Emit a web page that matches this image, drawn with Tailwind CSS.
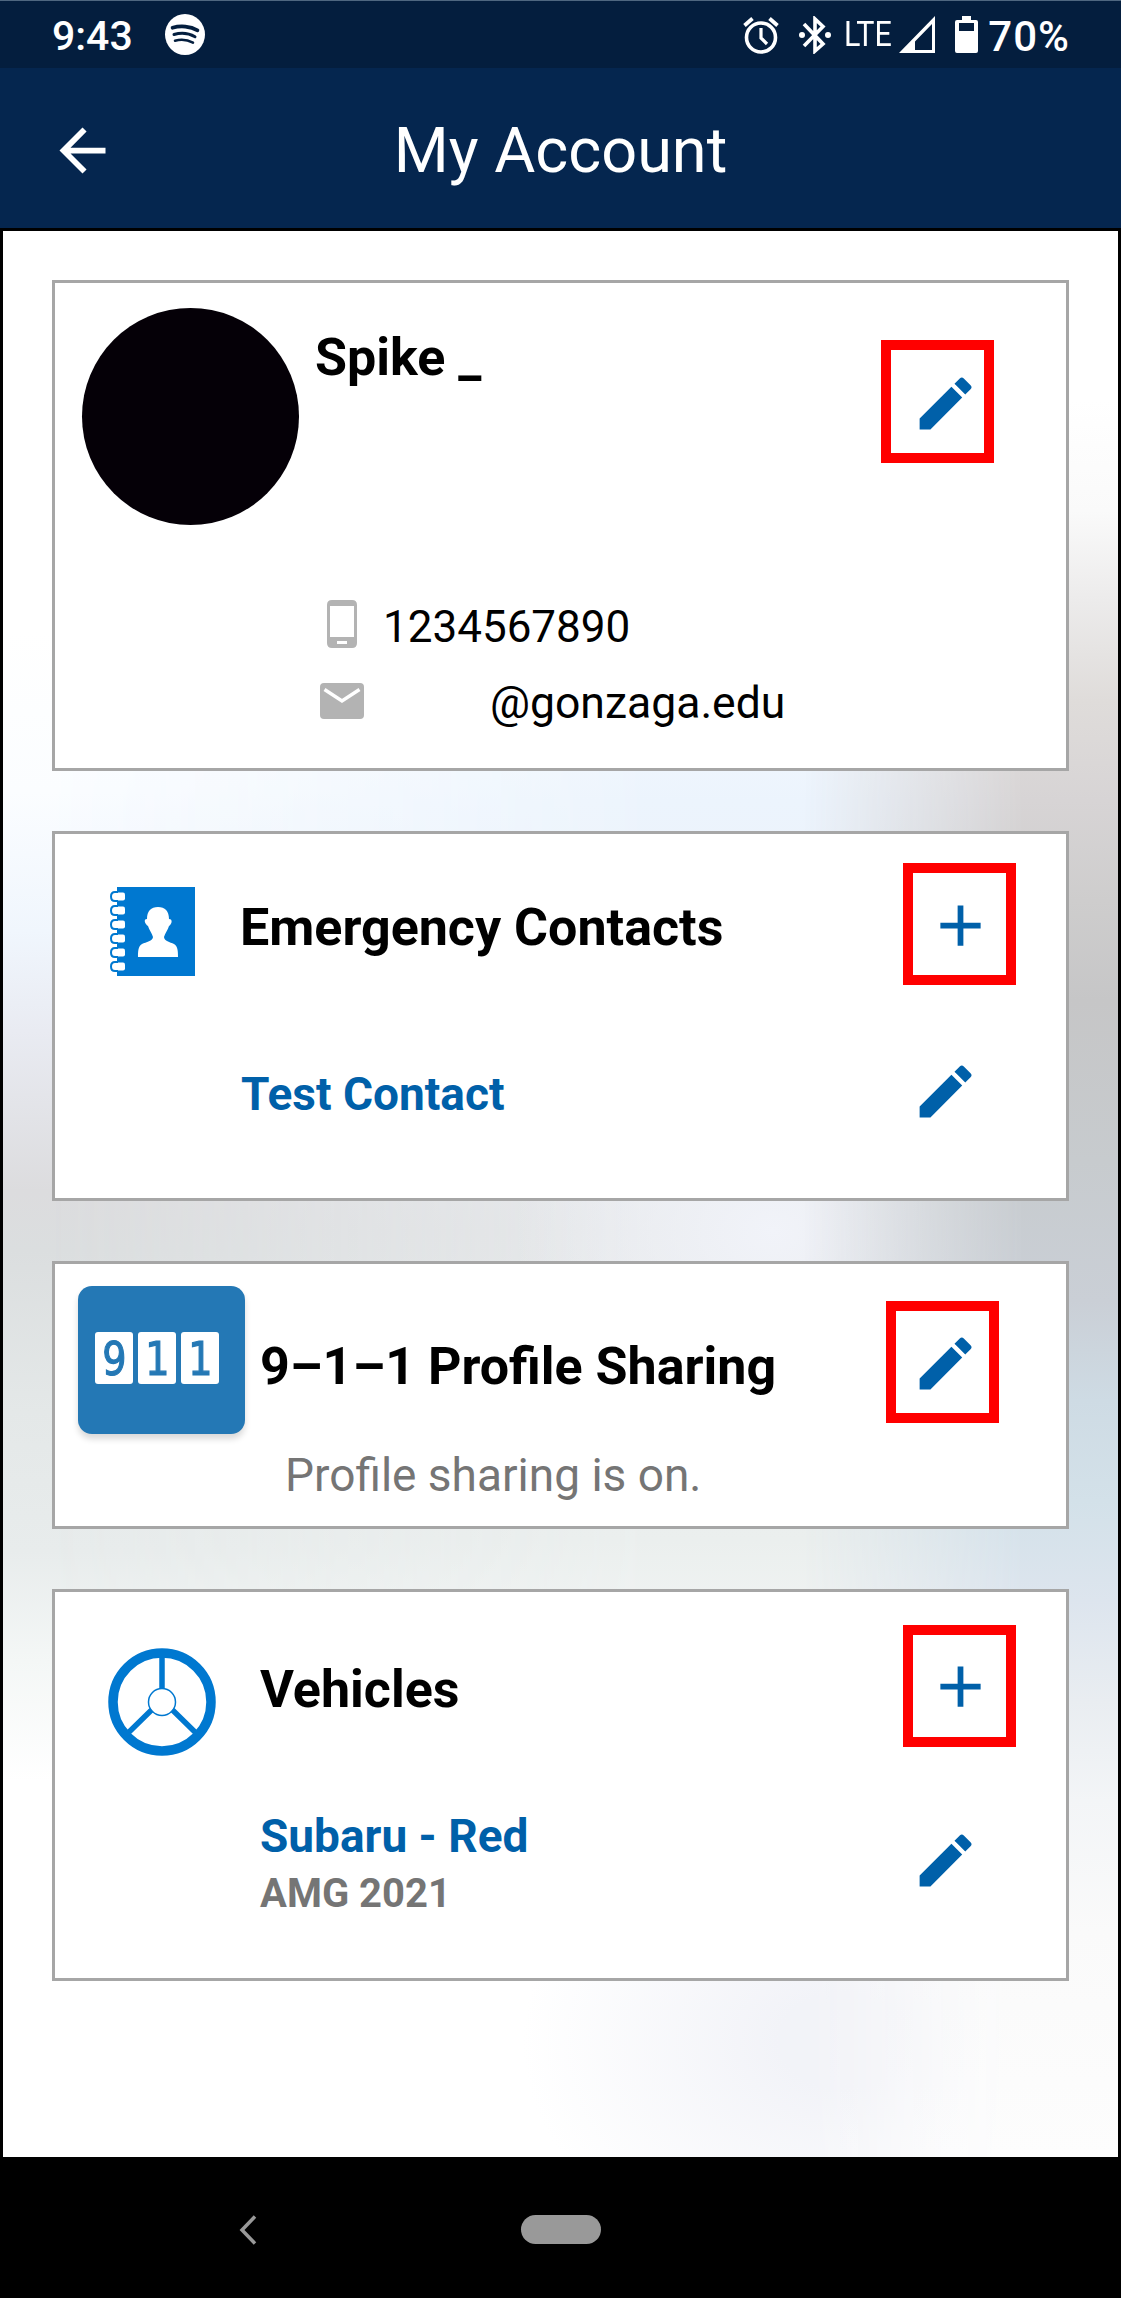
<!DOCTYPE html>
<html lang="en">
<head>
  <meta charset="UTF-8">
  <meta name="viewport" content="width=device-width, initial-scale=1.0">
  <title>My Account</title>
  <script src="https://cdn.jsdelivr.net/npm/@tailwindcss/browser@4"></script>
</head>
<body class="bg-white font-['Roboto',sans-serif]">
  <!-- shared icons -->
  <svg class="hidden">
    <symbol id="edit" viewBox="0 0 24 24">
      <path d="M3 17.25V21h3.75L17.81 9.94l-3.75-3.75L3 17.25zM20.71 7.04a.996.996 0 0 0 0-1.41l-2.34-2.34a.996.996 0 0 0-1.41 0l-1.83 1.83 3.75 3.75 1.83-1.83z"/>
    </symbol>
    <symbol id="add" viewBox="0 0 24 24">
      <path d="M19 13h-6v6h-2v-6H5v-2h6V5h2v6h6v2z"/>
    </symbol>
  </svg>

  <div class="w-[1121px] h-[2298px] flex flex-col bg-black border-t border-[#4f6780] overflow-hidden">
    <!-- status bar -->
    <div class="h-[67px] shrink-0 flex items-center bg-[#041e3e] text-white pl-[52px] pr-[51px]">
      <span class="text-[41px] leading-[67px] font-medium mt-[3px]">9:43</span>
      <svg class="w-10 h-[41px] ml-[32px]" viewBox="0 0 40 40" preserveAspectRatio="none">
        <circle cx="20" cy="20" r="20" fill="#fff"/>
        <g fill="none" stroke="#041e3e" stroke-linecap="round">
          <path d="M7.5 13.5c8-2.4 18-1.6 25 2.4" stroke-width="3.6"/>
          <path d="M9 20c7-2 15-1.2 21 2.2" stroke-width="3"/>
          <path d="M10 26c6-1.6 12.5-1 18 2" stroke-width="2.5"/>
        </g>
      </svg>
      <svg class="w-9 h-[38px] ml-auto" viewBox="0 0 36 38" fill="none" stroke="#fff">
        <circle cx="18" cy="21.5" r="14.5" stroke-width="3.6"/>
        <path d="M18 12v10l6 6" stroke-width="3.2"/>
        <path d="M1.5 9.5 9.5 2.5M34.5 9.5 26.5 2.5" stroke-width="3.8"/>
      </svg>
      <svg class="w-8 h-[38px] ml-[20px]" viewBox="0 0 32 38">
        <path d="M5 8 24 28 16 35V3l8 7.500L5 30" fill="none" stroke="#fff" stroke-width="3.6"/>
        <circle cx="3" cy="19" r="3" fill="#fff"/>
        <circle cx="29" cy="19" r="3" fill="#fff"/>
      </svg>
      <span class="w-[50px] ml-[13px] text-[35px] leading-[67px]"><span class="inline-block origin-left scale-x-[.87]">LTE</span></span>
      <svg class="w-9 h-[37px] ml-[5px]" viewBox="0 0 36 37">
        <path d="M36 0v37H0zM33 8 16 25.500V34h17z" fill="#fff" fill-rule="evenodd"/>
      </svg>
      <svg class="w-[23px] h-[37px] ml-5" viewBox="0 0 23 37">
        <path d="M7 0h9v4h5q2 0 2 2v29q0 2-2 2H2q-2 0-2-2V6q0-2 2-2h5zM4 7v8h15V7z" fill="#fff" fill-rule="evenodd"/>
      </svg>
      <span class="ml-[10px] text-[42px] leading-[67px] font-medium tracking-[1px] mt-[3px]">70%</span>
    </div>

    <!-- app bar -->
    <header class="relative h-[160px] shrink-0 flex items-center justify-center bg-[#05264f] text-white">
      <svg class="absolute left-[48px] top-[48px] size-[69px]" viewBox="0 0 24 24" fill="#fff">
        <path d="M20 11H7.83l5.59-5.59L12 4l-8 8 8 8 1.410-1.410L7.83 13H20v-2z"/>
      </svg>
      <h1 class="mt-[5px] text-[63px] leading-[80px]">My Account</h1>
    </header>

    <main class="relative h-[1926px] shrink-0 mt-[3px] mx-[3px] flex flex-col gap-[60px] pt-[49px] pl-[49px] bg-white">
      <!-- soft backdrop: left, middle and right columns, then two local tints -->
      <div class="absolute inset-0 bg-[linear-gradient(180deg,#fff_400px,#fbfdff_560px,#f0f6fd_700px,#e9ebf2_800px,#dcdcde_960px,#dbdedf_1020px,#e4e8e8_1180px,#e8ecec_1320px,#f4f7f6_1430px,#fff_1550px)]"></div>
      <div class="absolute inset-0 bg-[linear-gradient(180deg,#fff_300px,#ecf4fd_570px,#ecf2fa_700px,#e6e8ea_1000px,#ebefee_1310px,#fff_1600px)] [mask-image:linear-gradient(90deg,transparent_40px,black_650px)]"></div>
      <div class="absolute inset-0 bg-[radial-gradient(260px_200px_at_770px_1000px,#f1f3f9,transparent)]"></div>
      <div class="absolute inset-0 bg-[radial-gradient(320px_240px_at_840px_1810px,#f2f3f8_20%,transparent)]"></div>
      <div class="absolute inset-0 bg-[linear-gradient(180deg,#fff_170px,#fafafa_280px,#ecebeb_370px,#dfdcda_470px,#d7d4d5_570px,#cecdcd_670px,#c6c6c7_770px,#c7cbce_930px,#cacfd6_1070px,#cedbe4_1170px,#d3e1e9_1270px,#dde5ee_1370px,#e9edf1_1470px,#f3f5f7_1570px,#fafafa_1700px,#fdfdfd_1926px)] [mask-image:linear-gradient(90deg,transparent_800px,black_1020px)]"></div>

      <!-- profile -->
      <section class="relative w-[1017px] h-[491px] flex items-start border-3 border-[#a6a6a6] bg-white">
        <div class="size-[217px] ml-[27px] mt-[25px] rounded-full bg-[#050007]"></div>
        <div class="ml-[16px] mt-[45px]">
          <h2 class="text-[52px] leading-[60px] font-bold">Spike _</h2>
          <div class="flex gap-[16px] mt-[211px]">
            <svg class="w-[52px] h-[56px]" viewBox="0 0 52 56">
              <path d="M17 1h20q5 0 5 5v38q0 5-5 5H17q-5 0-5-5V6q0-5 5-5zM15 7v31h24V7zM22 42v3h10v-3z" fill="#b3b3b3" fill-rule="evenodd"/>
            </svg>
            <span class="text-[44px] leading-[56px]">1234567890</span>
          </div>
          <div class="flex mt-[20px]">
            <svg class="w-[52px] h-[56px]" viewBox="0 0 52 56">
              <rect x="5" y="8" width="44" height="36" rx="4" fill="#b3b3b3"/>
              <path d="M9.5 14.5 27 26 44.5 14.5" fill="none" stroke="#fff" stroke-width="3.5"/>
            </svg>
            <span class="ml-[123px] text-[44.5px] leading-[56px]">@gonzaga.edu</span>
          </div>
        </div>
        <svg class="size-[69px] ml-auto mr-[86px] mt-[86px] fill-[#0060a9]"><use href="#edit"/></svg>
        <div class="absolute left-[826px] top-[57px] w-[113px] h-[123px] border-10 border-[#f00]"></div>
      </section>

      <!-- emergency contacts -->
      <section class="relative w-[1017px] h-[370px] border-3 border-[#a6a6a6] bg-white">
        <div class="flex items-start h-[89px] mt-[53px]">
          <svg class="w-[85px] h-[89px] ml-[55px]" viewBox="0 0 85 89">
            <path d="M7 0h78v89H7z" fill="#0078d0"/>
            <g fill="#fff">
              <rect x="4" y="5.500" width="11" height="8" rx="2"/>
              <rect x="4" y="19.500" width="11" height="8" rx="2"/>
              <rect x="4" y="33.500" width="11" height="8" rx="2"/>
              <rect x="4" y="47.500" width="11" height="8" rx="2"/>
              <rect x="4" y="61.500" width="11" height="8" rx="2"/>
              <rect x="4" y="75.500" width="11" height="8" rx="2"/>
            </g>
            <path d="M8 5H5q-4 0-4 4.500T5 14h3M8 19H5q-4 0-4 4.500T5 28h3M8 33H5q-4 0-4 4.500T5 42h3M8 47H5q-4 0-4 4.500T5 56h3M8 61H5q-4 0-4 4.500T5 70h3M8 75H5q-4 0-4 4.500T5 84h3" fill="none" stroke="#0078d0" stroke-width="2"/>
            <path d="M48 20c7 0 11 4 11 12 4 0 3 5 0 7-1 4-4 7-5 11 0 4 6 5 10 7 4 2 4 8 4 13H28c0-5 0-11 4-13 4-2 11-3 11-7-1-4-4-7-5-11-3-2-5-7-1-7 0-8 4-12 11-12z" fill="#fff"/>
          </svg>
          <h2 class="ml-[45px] mt-[11px] text-[52px] leading-[60px] font-bold">Emergency Contacts</h2>
          <svg class="size-[69px] ml-auto mr-[71px] mt-[4px] fill-[#0060a9]"><use href="#add"/></svg>
        </div>
        <div class="flex items-start mt-[81px] pl-[186px]">
          <span class="mt-[7px] text-[46px] leading-[60px] font-bold text-[#0060a9]">Test Contact</span>
          <svg class="size-[69px] ml-auto mr-[86px] fill-[#0060a9]"><use href="#edit"/></svg>
        </div>
        <div class="absolute left-[848px] top-[29px] w-[113px] h-[122px] border-10 border-[#f00]"></div>
      </section>

      <!-- 911 profile -->
      <section class="relative w-[1017px] h-[268px] flex items-start border-3 border-[#a6a6a6] bg-white">
        <div class="w-[167px] h-[148px] ml-[23px] mt-[22px] pl-[17px] pt-[46px] flex items-start gap-[5px] rounded-[14px] bg-[#2478b5] shadow-[0_5px_6px_rgba(0,0,0,0.15)] font-['DejaVu_Sans_Condensed','DejaVu_Sans',sans-serif] text-[47px] leading-[53px] text-center text-[#2478b5] [-webkit-text-stroke:1.2px_#2478b5]">
          <span class="w-[38px] h-[52px] rounded-[3px] bg-white"><span class="inline-block scale-x-90">9</span></span>
          <span class="w-[38px] h-[52px] rounded-[3px] bg-white"><span class="inline-block scale-x-90">1</span></span>
          <span class="w-[38px] h-[52px] rounded-[3px] bg-white"><span class="inline-block scale-x-90">1</span></span>
        </div>
        <div class="ml-[15px] mt-[73px]">
          <h2 class="text-[52px] leading-[60px] font-bold">9–1–1 Profile Sharing</h2>
          <p class="mt-[52px] pl-[25px] text-[46px] leading-[52px] text-[#757575]">Profile sharing is on.</p>
        </div>
        <svg class="size-[69px] ml-auto mr-[86px] mt-[65px] fill-[#0060a9]"><use href="#edit"/></svg>
        <div class="absolute left-[831px] top-[37px] w-[113px] h-[122px] border-10 border-[#f00]"></div>
      </section>

      <!-- vehicles -->
      <section class="relative w-[1017px] h-[392px] border-3 border-[#a6a6a6] bg-white">
        <div class="flex items-start h-[108px] mt-[56px]">
          <svg class="size-[108px] ml-[53px]" viewBox="0 0 108 108" fill="none" stroke="#0078d0">
            <circle cx="54" cy="54" r="49" stroke-width="9.5"/>
            <circle cx="54" cy="54" r="13.5" stroke-width="1.5"/>
            <path d="M54 8v32M43.5 62 19 86M64.5 62 89 86" stroke-width="5.5"/>
          </svg>
          <h2 class="ml-[44px] mt-[12px] text-[52px] leading-[60px] font-bold">Vehicles</h2>
          <svg class="size-[69px] ml-auto mr-[71px] mt-[4px] fill-[#0060a9]"><use href="#add"/></svg>
        </div>
        <div class="flex items-start mt-[50px] pl-[205px]">
          <div>
            <p class="text-[46px] leading-[60px] font-bold text-[#0060a9]">Subaru - Red</p>
            <p class="mt-[3px] text-[40px] leading-[50px] font-bold text-[#757575]">AMG 2021</p>
          </div>
          <svg class="size-[69px] ml-auto mr-[86px] mt-[20px] fill-[#0060a9]"><use href="#edit"/></svg>
        </div>
        <div class="absolute left-[848px] top-[33px] w-[113px] h-[122px] border-10 border-[#f00]"></div>
      </section>
    </main>

    <!-- system navigation -->
    <nav class="flex items-start pt-[58px] pl-[239px]">
      <svg class="w-[18px] h-[30px]" viewBox="0 0 18 30" fill="none" stroke="#999" stroke-width="3.5">
        <path d="M16 1.5 3 15l13 13.5"/>
      </svg>
      <div class="w-20 h-[29px] ml-[264px] rounded-full bg-[#999]"></div>
    </nav>
  </div>
</body>
</html>
